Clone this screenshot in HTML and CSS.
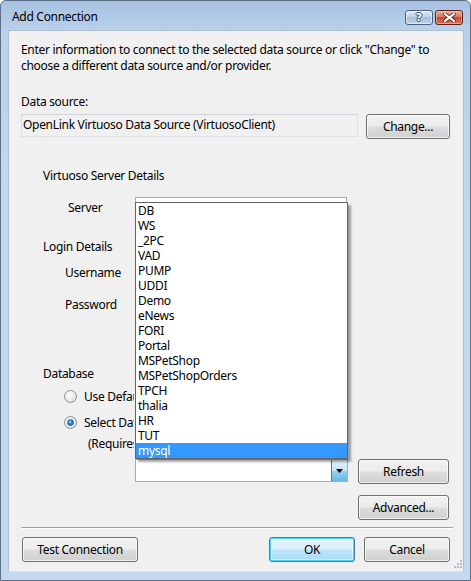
FILE: index.html
```html
<!DOCTYPE html>
<html>
<head>
<meta charset="utf-8">
<link rel="stylesheet" href="styles.css">
</head>
<body>
<div class="window">
  <div class="titlebar">
    <span class="title">Add Connection</span>
    <div class="caption-btns">
      <div class="cap-btn help"><span>?</span></div>
      <div class="cap-btn close">
        <svg width="13" height="9" viewBox="0 0 13 9"><path d="M2 1 L11 8 M11 1 L2 8" stroke="#4a1a12" stroke-width="3.6" stroke-linecap="square"/><path d="M2 1 L11 8 M11 1 L2 8" stroke="#ffffff" stroke-width="2.2" stroke-linecap="square"/></svg>
      </div>
    </div>
  </div>
  <div class="client">
    <p class="intro">Enter information to connect to the selected data source or click "Change" to choose a different data source and/or provider.</p>
    <div class="label ds-label">Data source:</div>
    <div class="ds-row">
      <div class="readonly-box">OpenLink Virtuoso Data Source (VirtuosoClient)</div>
      <button class="btn change">Change...</button>
    </div>

    <div class="label group-title vsd">Virtuoso Server Details</div>
    <div class="field-row server-row">
      <span class="field-label server-label">Server</span>
      <div class="textbox"></div>
    </div>

    <div class="label group-title login">Login Details</div>
    <div class="field-row user-row">
      <span class="field-label">Username</span>
      <div class="textbox"></div>
    </div>
    <div class="field-row pass-row">
      <span class="field-label">Password</span>
      <div class="textbox"></div>
    </div>

    <div class="label group-title db">Database</div>
    <div class="radio-row r1">
      <span class="radio"></span><span class="clip radio-text">Use Default Database</span>
    </div>
    <div class="radio-row r2">
      <span class="radio checked"></span><span class="clip radio-text">Select Database</span>
    </div>
    <div class="label requires"><span class="clip req-text">(Requires Username and Password)</span></div>

    <div class="combo-row">
      <div class="combo">
        <div class="combo-arrow">
          <svg width="7" height="4" viewBox="0 0 7 4"><path d="M0 0 H7 L3.5 4 Z" fill="#000"/></svg>
        </div>
        <ul class="dropdown">
          <li>DB</li>
          <li>WS</li>
          <li>_2PC</li>
          <li>VAD</li>
          <li>PUMP</li>
          <li>UDDI</li>
          <li>Demo</li>
          <li>eNews</li>
          <li>FORI</li>
          <li>Portal</li>
          <li>MSPetShop</li>
          <li>MSPetShopOrders</li>
          <li>TPCH</li>
          <li>thalia</li>
          <li>HR</li>
          <li>TUT</li>
          <li class="selected">mysql</li>
        </ul>
      </div>
      <button class="btn refresh">Refresh</button>
    </div>

    <div class="adv-row">
      <button class="btn advanced">Advanced...</button>
    </div>

    <div class="separator"></div>

    <div class="bottom-row">
      <button class="btn test">Test Connection</button>
      <div class="spacer"></div>
      <button class="btn ok">OK</button>
      <button class="btn cancel">Cancel</button>
    </div>
    <div class="grip">
      <svg width="8" height="8" viewBox="0 0 8 8">
        <rect x="6" y="0" width="2" height="2" fill="#b8bcc2"/>
        <rect x="3" y="3" width="2" height="2" fill="#b8bcc2"/>
        <rect x="6" y="3" width="2" height="2" fill="#b8bcc2"/>
        <rect x="0" y="6" width="2" height="2" fill="#b8bcc2"/>
        <rect x="3" y="6" width="2" height="2" fill="#b8bcc2"/>
        <rect x="6" y="6" width="2" height="2" fill="#b8bcc2"/>
      </svg>
    </div>
  </div>
</div>
</body>
</html>
```

FILE: styles.css
```css
* { box-sizing: border-box; }
html, body { margin: 0; padding: 0; background: #ffffff; }
body {
  font-family: "Noto Sans", "Open Sans", sans-serif;
  font-size: 12px;
  letter-spacing: -0.3px;
  color: #000;
}
.window {
  width: 471px;
  height: 581px;
  background: linear-gradient(to bottom, #a7c1e1 0px, #b9d1ea 30px, #c2d8ef 200px, #c4d9ef 100%);
  border: 1px solid #5e7088;
  border-radius: 6px 6px 0 0;
  display: flex;
  flex-direction: column;
  position: relative;
  overflow: hidden;
}
.titlebar {
  height: 29px;
  display: flex;
  align-items: flex-start;
  justify-content: space-between;
  padding: 0 7px 0 11px;
}
.title {
  margin-top: 8px;
  line-height: 16px;
  color: #000;
}
.caption-btns {
  display: flex;
  gap: 2px;
  margin-top: 9px;
}
.cap-btn {
  height: 15px;
  border: 1px solid #4f6077;
  border-radius: 3px;
  display: flex;
  align-items: center;
  justify-content: center;
}
.cap-btn.help {
  width: 28px;
  background: linear-gradient(to bottom, #dbe6f3 0%, #c2d3e8 45%, #a9bfdb 50%, #bcd1ea 100%);
  box-shadow: inset 0 0 0 1px rgba(255,255,255,0.55);
}
.cap-btn.help span {
  font-family: "DejaVu Sans", sans-serif;
  font-weight: bold;
  font-size: 11px;
  line-height: 11px;
  letter-spacing: 0;
  color: #fff;
  text-shadow: 1px 0 0 #3b4a5e, -1px 0 0 #3b4a5e, 0 1px 0 #3b4a5e, 0 -1px 0 #3b4a5e;
}
.cap-btn.close {
  width: 28px;
  border-color: #5a2016;
  background: linear-gradient(to bottom, #e8a99d 0%, #d77b69 45%, #c64a33 50%, #d2735d 100%);
  box-shadow: inset 0 0 0 1px rgba(255,220,210,0.45);
}
.client {
  flex: 1;
  margin: 0 6px 8px 7px;
  background: #f0f0f0;
  border: 1px solid #aebfd4;
  border-bottom-color: #d7e3f0;
  padding: 11px 12px 0 12px;
  display: flex;
  flex-direction: column;
  position: relative;
}
.intro {
  margin: 0;
  line-height: 16px;
  width: 428px;
}
.label { line-height: 16px; }
.ds-label { margin-top: 20px; }
.ds-row {
  margin-top: 4px;
  height: 25px;
  display: flex;
  align-items: flex-start;
  gap: 8px;
}
.readonly-box {
  width: 337px;
  height: 23px;
  border: 1px solid #dcdfe4;
  border-top-color: #cfd3d8;
  background: #f0f0f0;
  line-height: 20px;
  padding-left: 1px;
}
.btn {
  font-family: inherit;
  font-size: 12px;
  letter-spacing: -0.3px;
  color: #000;
  height: 25px;
  padding: 0;
  border: 1px solid #707070;
  border-radius: 3px;
  background: linear-gradient(to bottom, #f2f2f2 0%, #ebebeb 48%, #dddddd 52%, #cfcfcf 100%);
  box-shadow: inset 0 0 0 1px rgba(255,255,255,0.7);
}
.btn.change { width: 84px; }
.group-title { padding-left: 22px; }
.vsd { margin-top: 29px; }
.field-row {
  display: flex;
  align-items: center;
  height: 22px;
}
.field-label { line-height: 16px; }
.textbox {
  width: 212px;
  height: 22px;
  border: 1px solid #abadb3;
  background: #fff;
}
.server-row { margin-top: 13px; }
.server-row .field-label { width: 114px; padding-left: 47px; }
.user-row .field-label, .pass-row .field-label { width: 114px; padding-left: 44px; }
.login { margin-top: 20px; }
.user-row { margin-top: 7px; }
.pass-row { margin-top: 10px; }
.db { margin-top: 50px; }
.radio-row {
  display: flex;
  align-items: center;
  height: 16px;
  padding-left: 43px;
  gap: 7px;
}
.clip {
  display: inline-block;
  white-space: nowrap;
  overflow: hidden;
  vertical-align: top;
}
.radio-text { width: 50px; }
.r1 { margin-top: 6px; }
.r2 { margin-top: 10px; }
.radio {
  width: 13px;
  height: 13px;
  border-radius: 50%;
  border: 1px solid #8d8e8e;
  background: radial-gradient(circle at 40% 35%, #ffffff 0%, #eeeeee 45%, #d4d4d4 100%);
  position: relative;
  flex: none;
}
.radio.checked::after {
  content: "";
  position: absolute;
  left: 2px;
  top: 2px;
  width: 7px;
  height: 7px;
  border-radius: 50%;
  background: radial-gradient(circle at 40% 35%, #a8d8f8 0%, #2f86c8 45%, #0b4f86 100%);
  border: 1px solid #2a5d8a;
  box-sizing: border-box;
}
.requires { margin-top: 6px; padding-left: 67px; height: 16px; }
.req-text { width: 46px; }
.combo-row {
  margin-top: 7px;
  height: 24px;
  display: flex;
  align-items: flex-start;
  padding-left: 114px;
  gap: 10px;
}
.combo {
  width: 213px;
  height: 23px;
  border: 1px solid #7eb4ea;
  background: #fff;
  position: relative;
  display: flex;
  justify-content: flex-end;
}
.combo-arrow {
  width: 16px;
  height: 21px;
  border-left: 1px solid #3c7fb1;
  background: linear-gradient(to bottom, #e5f4fc 0%, #c4e5f6 50%, #98d1ef 52%, #6ab8e4 100%);
  display: flex;
  align-items: center;
  justify-content: center;
}
.dropdown {
  position: absolute;
  left: -1px;
  bottom: 22px;
  width: 213px;
  margin: 0;
  padding: 0;
  list-style: none;
  background: #fff;
  border: 1px solid #646464;
  box-shadow: 3px 3px 2px rgba(0,0,0,0.35);
}
.dropdown li {
  height: 15px;
  line-height: 15px;
  padding-left: 2px;
  white-space: nowrap;
}
.dropdown li.selected {
  background: #3399ff;
  color: #fff;
}
.btn.refresh { width: 91px; }
.adv-row {
  margin-top: 12px;
  display: flex;
  justify-content: flex-end;
  padding-right: 2px;
}
.btn.advanced { width: 91px; }
.separator {
  margin-top: 7px;
  height: 2px;
  border-top: 1px solid #a0a0a0;
  border-bottom: 1px solid #ffffff;
  width: 432px;
}
.bottom-row {
  margin-top: 8px;
  display: flex;
  align-items: flex-start;
  padding-left: 1px;
}
.btn.test { width: 116px; }
.spacer { flex: 1; }
.btn.ok {
  width: 86px;
  border-color: #3c7fb1;
  background: linear-gradient(to bottom, #eaf6fd 0%, #d9f0fc 48%, #bee6fd 52%, #a7d9f5 100%);
  box-shadow: inset 0 0 0 1px #48d5fb, inset 0 0 0 2px rgba(255,255,255,0.5);
}
.btn.cancel { width: 86px; margin-left: 9px; margin-right: 1px; }
.grip {
  position: absolute;
  right: 1px;
  bottom: 3px;
  line-height: 0;
}
```
